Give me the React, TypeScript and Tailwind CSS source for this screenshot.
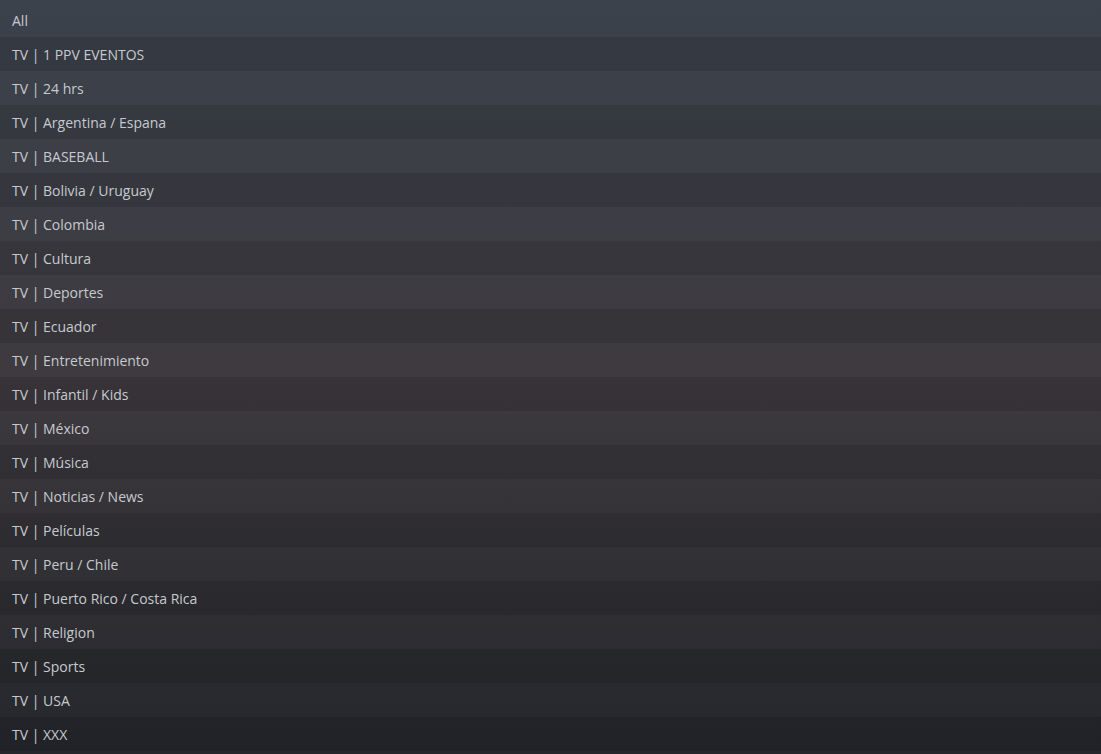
const groups = [
  "All",
  "TV | 1 PPV EVENTOS",
  "TV | 24 hrs",
  "TV | Argentina / Espana",
  "TV | BASEBALL",
  "TV | Bolivia / Uruguay",
  "TV | Colombia",
  "TV | Cultura",
  "TV | Deportes",
  "TV | Ecuador",
  "TV | Entretenimiento",
  "TV | Infantil / Kids",
  "TV | México",
  "TV | Música",
  "TV | Noticias / News",
  "TV | Películas",
  "TV | Peru / Chile",
  "TV | Puerto Rico / Costa Rica",
  "TV | Religion",
  "TV | Sports",
  "TV | USA",
  "TV | XXX",
];

export default function App() {
  return (
    <div
      className="h-[754px] w-[1101px] overflow-hidden bg-gradient-to-b from-[#3b424c] via-[#3e3a3f] to-[#25272c] pt-[3px]"
      style={{ fontFamily: '"Open Sans", "Liberation Sans", sans-serif' }}
    >
      {/* group list, alternating stripes */}
      {groups.map((name, i) => (
        <div
          key={name}
          className={
            "flex h-[34px] items-center px-3 text-[14px] text-[#c6cacf] " +
            (i % 2 === 0 ? "bg-transparent" : "bg-black/[0.11]")
          }
        >
          {name}
        </div>
      ))}
    </div>
  );
}
